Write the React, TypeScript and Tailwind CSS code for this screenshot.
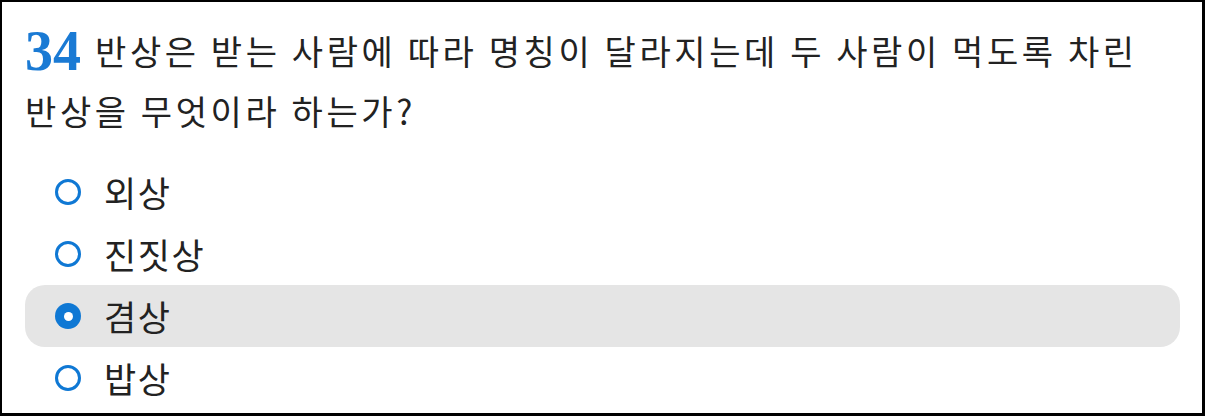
import { useState } from 'react'

const options = ['외상', '진짓상', '겸상', '밥상']

const kr = { fontFamily: '"Noto Sans CJK KR", "Noto Sans", sans-serif' }

const App = () => {
  const [picked, setPicked] = useState(2)

  return (
    <div className="w-[1205px] h-[416px] bg-white border-black border-t-2 border-l-2 border-r-[3px] border-b-[3px] pl-[23px] pr-[22px] pt-[19px] overflow-hidden">
      <div className="text-[34px] leading-[60px] tracking-[3.6px] text-[#222]" style={kr}>
        <span className="inline-block leading-[60px] text-[56px] font-bold text-[#1a7ad4] tracking-normal mr-[14px] align-top" style={{ fontFamily: '"Liberation Serif", serif' }}>34</span>
        반상은 받는 사람에 따라 명칭이 달라지는데 두 사람이 먹도록 차린
        <br />
        반상을 무엇이라 하는가?
      </div>
      <div className="mt-[20px] flex flex-col">
        {options.map((opt, i) => (
          <div
            key={opt}
            onClick={() => setPicked(i)}
            className={`flex items-center h-[62px] pl-[30px] rounded-[20px] cursor-pointer ${picked === i ? 'bg-[#e5e5e5]' : ''}`}
          >
            {picked === i ? (
              <span className="w-[26px] h-[26px] rounded-full bg-[#0f78d4] flex items-center justify-center">
                <span className="w-[9px] h-[9px] rounded-full bg-white" />
              </span>
            ) : (
              <span className="w-[26px] h-[26px] rounded-full border-[3px] border-[#0f78d4] bg-white" />
            )}
            <span className="ml-[23px] text-[35px] tracking-[1.5px] text-[#222]" style={kr}>{opt}</span>
          </div>
        ))}
      </div>
    </div>
  )
}

export default App
